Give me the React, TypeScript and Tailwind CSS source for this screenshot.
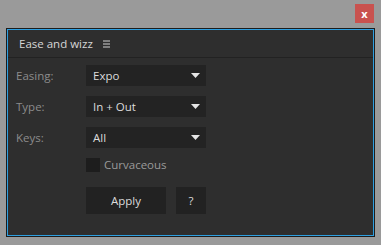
import React from "react";

const font = { fontFamily: '"Open Sans", "Noto Sans", sans-serif' };

function Caret() {
  return (
    <svg width="9" height="5" viewBox="0 0 9 5" className="block">
      <polygon points="0,0 9,0 4.5,5" fill="#e6e6e6" />
    </svg>
  );
}

function Select({ value }: { value: string }) {
  return (
    <div className="flex h-[21px] w-[120px] items-center justify-between bg-[#232323] pl-[7px] pr-[6px] text-[11.5px] text-[#dcdcdc]">
      <span>{value}</span>
      <Caret />
    </div>
  );
}

function Row({ label, value }: { label: string; value: string }) {
  return (
    <div className="flex items-center">
      <div className="w-[70px] text-[11.5px] text-[#8c8c8c]">{label}</div>
      <Select value={value} />
    </div>
  );
}

export default function App() {
  return (
    <div
      className="flex h-[245px] w-[381px] flex-col bg-[#9a9a9a] px-[6px] pb-[8px] pt-[4px]"
      style={font}
    >
      <div className="flex justify-end pr-[1px]">
        <div className="flex h-[19px] w-[19px] items-center justify-center bg-[#c9524f] text-[11px] font-bold leading-none text-white">
          x
        </div>
      </div>
      <div className="mt-[5px] flex-1 border border-[#1c1c1c]">
        <div className="flex h-full flex-col border border-[#2e9fe0] bg-[#2e2e2e]">
          <div className="flex h-[28px] items-center border-b border-[#222] pl-[11px]">
            <span className="text-[11.5px] text-[#d6d6d6]">Ease and wizz</span>
            <svg width="7" height="8" viewBox="0 0 7 8" className="ml-[10px]">
              <rect x="0" y="0.5" width="7" height="1" fill="#cfcfcf" />
              <rect x="0" y="3.5" width="7" height="1" fill="#cfcfcf" />
              <rect x="0" y="6.5" width="7" height="1" fill="#cfcfcf" />
            </svg>
          </div>
          <div className="flex flex-col gap-[10px] pl-[8px] pt-[7px]">
            <Row label="Easing:" value="Expo" />
            <Row label="Type:" value="In + Out" />
            <Row label="Keys:" value="All" />
            <div className="flex h-[14px] items-center pl-[70px]">
              <div className="h-[14px] w-[14px] bg-[#1d1d1d]" />
              <span className="ml-[4px] text-[11.5px] text-[#9a9a9a]">Curvaceous</span>
            </div>
            <div className="mt-[5px] flex gap-[10px] pl-[70px]">
              <div className="flex h-[27px] w-[80px] items-center justify-center bg-[#222] text-[11.5px] text-[#dcdcdc]">
                Apply
              </div>
              <div className="flex h-[27px] w-[30px] items-center justify-center bg-[#222] text-[11.5px] text-[#dcdcdc]">
                ?
              </div>
            </div>
          </div>
        </div>
      </div>
    </div>
  );
}
